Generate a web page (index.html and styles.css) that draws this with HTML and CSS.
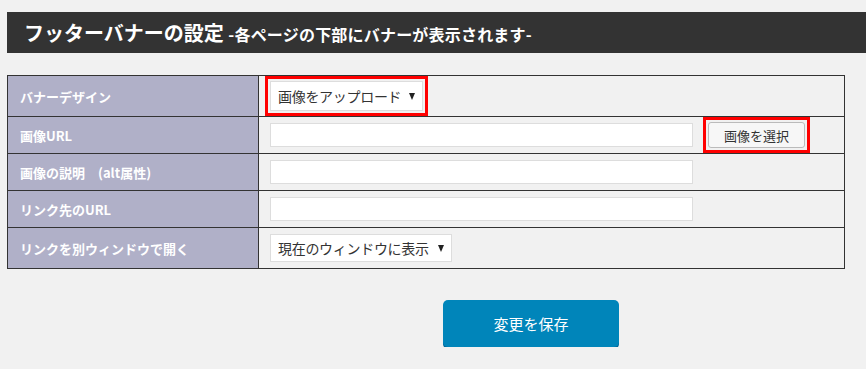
FILE: index.html
```html
<!DOCTYPE html>
<html lang="ja">
  <head>
    <meta charset="UTF-8">
    <title>フッターバナーの設定</title>
    <link rel="stylesheet" href="styles.css">
  </head>
  <body>
    <h2 class="page-title">フッターバナーの設定 <small>-各ページの下部にバナーが表示されます-</small></h2>
    <form class="settings">
      <table class="form-table">
        <tr class="row-tall">
          <th>バナーデザイン</th>
          <td>
            <span class="select-wrap highlight">
              <select class="select">
                <option>画像をアップロード</option>
              </select>
            </span>
          </td>
        </tr>
        <tr>
          <th>画像URL</th>
          <td>
            <div class="field-with-button">
              <input type="text" class="text-input">
              <span class="button-wrap highlight">
                <button type="button" class="button">画像を選択</button>
              </span>
            </div>
          </td>
        </tr>
        <tr>
          <th>画像の説明　(alt属性)</th>
          <td><input type="text" class="text-input"></td>
        </tr>
        <tr>
          <th>リンク先のURL</th>
          <td><input type="text" class="text-input"></td>
        </tr>
        <tr class="row-tall">
          <th>リンクを別ウィンドウで開く</th>
          <td>
            <span class="select-wrap">
              <select class="select select-wide">
                <option>現在のウィンドウに表示</option>
              </select>
            </span>
          </td>
        </tr>
      </table>
      <p class="submit">
        <button type="submit" class="button-primary">変更を保存</button>
      </p>
    </form>
  </body>
</html>
```

FILE: styles.css
```css
body {
  margin: 0;
  background-color: #f1f1f1;
  font-family: "Noto Sans CJK JP", "Noto Sans", sans-serif;
  color: #333;
}

.page-title {
  margin: 12px 0 0 7px;
  height: 41px;
  padding: 0 0 0 17px;
  background-color: #333;
  color: #fff;
  font-size: 20px;
  font-weight: bold;
  line-height: 41px;
}

.page-title small {
  font-size: 16px;
  letter-spacing: 0.2px;
}

.settings {
  margin: 0;
}

.form-table {
  margin: 22px 0 0 7px;
  width: 838px;
  border-collapse: collapse;
  border: 1px solid #333;
}

.form-table th,
.form-table td {
  border: 1px solid #333;
  height: 36px;
  padding: 0;
  line-height: 1;
}

.form-table tr.row-tall th,
.form-table tr.row-tall td {
  height: 40px;
}

.form-table th {
  width: 238px;
  padding-left: 12px;
  background-color: #b0b0c8;
  color: #fff;
  font-size: 13px;
  font-weight: bold;
  text-align: left;
}

.form-table td {
  padding-left: 11px;
}

.text-input {
  box-sizing: border-box;
  width: 423px;
  height: 24px;
  margin: 0;
  border: 1px solid #ddd;
  background-color: #fff;
  vertical-align: middle;
}

.field-with-button {
  display: flex;
  align-items: center;
}

/* red marker round the fields being explained */
.highlight {
  outline: 3px solid #f00;
  outline-offset: 2px;
}

.select-wrap {
  position: relative;
  display: inline-block;
  vertical-align: middle;
  line-height: 0;
}

.select-wrap::after {
  content: "";
  position: absolute;
  right: 8px;
  top: 50%;
  margin-top: -3px;
  border-left: 3.5px solid transparent;
  border-right: 3.5px solid transparent;
  border-top: 7px solid #222;
  pointer-events: none;
}

.select {
  -webkit-appearance: none;
  appearance: none;
  box-sizing: border-box;
  height: 30px;
  width: 153px;
  margin: 0;
  padding: 0 18px 0 7px;
  border: 1px solid #ddd;
  background-color: #fff;
  color: #333;
  font-family: inherit;
  font-size: 14px;
  letter-spacing: -0.3px;
}

.select-wide {
  width: 182px;
  height: 28px;
}

.button-wrap {
  display: block;
  margin-left: 15px;
  line-height: 0;
}

.button {
  box-sizing: border-box;
  width: 97px;
  height: 26px;
  margin: 0;
  border: 1px solid #bbb;
  border-radius: 3px;
  background-color: #f7f7f7;
  color: #333;
  font-family: inherit;
  font-size: 13px;
  line-height: 1;
}

.submit {
  margin: 31px 0 0 443px;
}

.button-primary {
  width: 176px;
  height: 47px;
  border: none;
  border-radius: 5px;
  background-color: #0085ba;
  box-shadow: 0 2px 0 #006799;
  color: #fff;
  font-family: inherit;
  font-size: 15px;
}
```
